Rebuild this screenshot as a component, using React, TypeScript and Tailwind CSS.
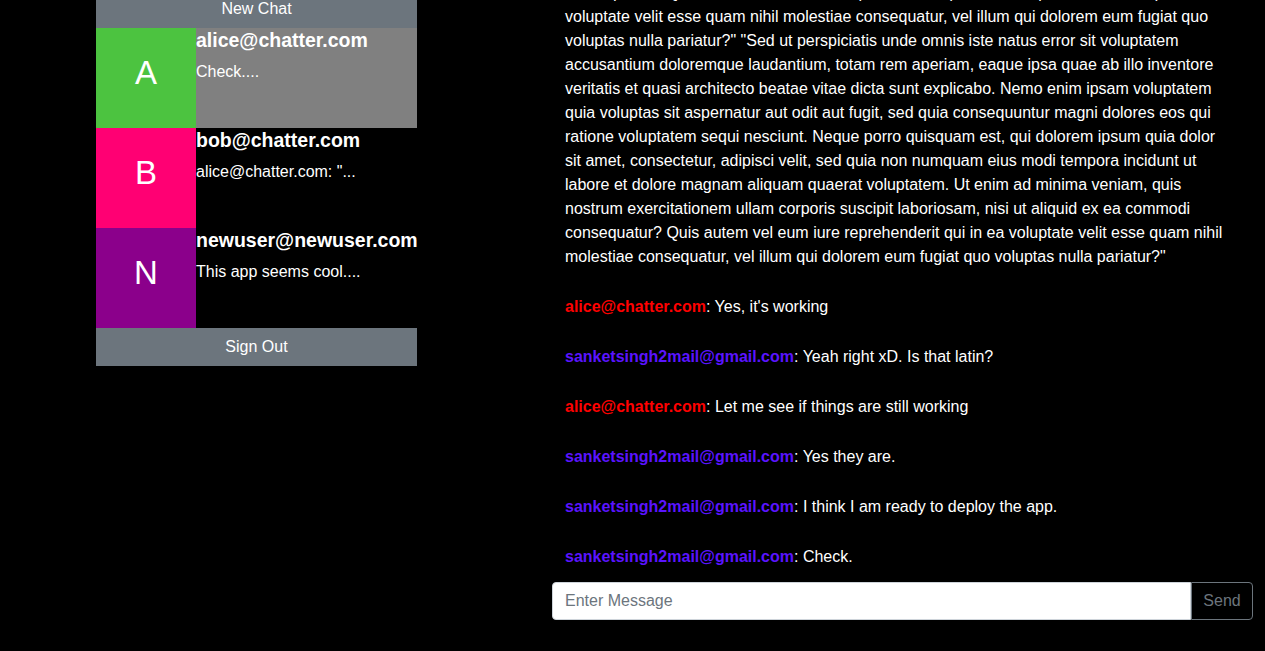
import React from 'react';

interface Conversation {
  email: string;
  preview: string;
  letter: string;
  color: string;
  active?: boolean;
}

interface Message {
  from: string;
  lines: string[];
}

const conversations: Conversation[] = [
  { email: 'alice@chatter.com', preview: 'Check....', letter: 'A', color: 'bg-[#4cc340]', active: true },
  { email: 'bob@chatter.com', preview: 'alice@chatter.com: "...', letter: 'B', color: 'bg-[#ff0073]' },
  { email: 'newuser@newuser.com', preview: 'This app seems cool....', letter: 'N', color: 'bg-[#8b008b]' },
];

const ME = 'sanketsingh2mail@gmail.com';

const messages: Message[] = [
  {
    from: ME,
    lines: [
      'labore et dolore magnam aliquam quaerat voluptatem. Ut enim ad minima veniam, quis',
      'nostrum exercitationem ullam corporis suscipit laboriosam, nisi ut aliquid ex ea commodi',
      'consequatur? Quis autem vel eum iure reprehenderit qui in ea voluptate velit esse quam nihil',
      'voluptate velit esse quam nihil molestiae consequatur, vel illum qui dolorem eum fugiat quo',
      'voluptas nulla pariatur?" "Sed ut perspiciatis unde omnis iste natus error sit voluptatem',
      'accusantium doloremque laudantium, totam rem aperiam, eaque ipsa quae ab illo inventore',
      'veritatis et quasi architecto beatae vitae dicta sunt explicabo. Nemo enim ipsam voluptatem',
      'quia voluptas sit aspernatur aut odit aut fugit, sed quia consequuntur magni dolores eos qui',
      'ratione voluptatem sequi nesciunt. Neque porro quisquam est, qui dolorem ipsum quia dolor',
      'sit amet, consectetur, adipisci velit, sed quia non numquam eius modi tempora incidunt ut',
      'labore et dolore magnam aliquam quaerat voluptatem. Ut enim ad minima veniam, quis',
      'nostrum exercitationem ullam corporis suscipit laboriosam, nisi ut aliquid ex ea commodi',
      'consequatur? Quis autem vel eum iure reprehenderit qui in ea voluptate velit esse quam nihil',
      'molestiae consequatur, vel illum qui dolorem eum fugiat quo voluptas nulla pariatur?"',
    ],
  },
  { from: 'alice@chatter.com', lines: ["Yes, it's working"] },
  { from: ME, lines: ['Yeah right xD. Is that latin?'] },
  { from: 'alice@chatter.com', lines: ['Let me see if things are still working'] },
  { from: ME, lines: ['Yes they are.'] },
  { from: ME, lines: ['I think I am ready to deploy the app.'] },
  { from: ME, lines: ['Check.'] },
];

const font = "font-['Liberation_Sans',Arial,sans-serif]";

const App: React.FC = () => {
  return (
    <div className={`h-[651px] w-full overflow-hidden bg-black text-white ${font}`}>
      <div className="flex pl-[96px]">
        {/* sidebar */}
        <div className="w-[321px] shrink-0 -mt-[10px]">
          <button className="block h-[38px] w-full bg-[#6c757d] text-center text-base leading-6 text-white">
            New Chat
          </button>
          {conversations.map((c) => (
            <div key={c.email} className={`flex h-[100px] ${c.active ? 'bg-[#808080]' : 'bg-black'}`}>
              <div className={`flex h-[100px] w-[100px] shrink-0 items-center justify-center pb-[10px] text-[33px] text-white ${c.color}`}>
                {c.letter}
              </div>
              <div className="min-w-0 flex-1">
                <h5 className="mb-2 whitespace-nowrap text-[19.5px] font-semibold leading-6">{c.email}</h5>
                <p className="text-base leading-6">{c.preview}</p>
              </div>
            </div>
          ))}
          <button className="block h-[38px] w-full bg-[#6c757d] text-center text-base leading-6 text-white">
            Sign Out
          </button>
        </div>

        {/* chat */}
        <div className="ml-[135px] w-[701px] shrink-0">
          <div className="flex h-[582px] flex-col justify-end gap-[26px] overflow-hidden px-[13px] pb-[13px]">
            {messages.map((m, i) => (
              <div key={i} className="shrink-0 text-base leading-6">
                {m.lines.map((line, j) => (
                  <span key={j} className="block whitespace-nowrap">
                    {j === 0 && (
                      <>
                        <span className={`font-bold ${m.from === ME ? 'text-[#5a14ff]' : 'text-[#ff0000]'}`}>{m.from}</span>
                        {': '}
                      </>
                    )}
                    {line}
                  </span>
                ))}
              </div>
            ))}
          </div>
          <div className="flex h-[38px]">
            <input
              type="text"
              placeholder="Enter Message"
              className="h-full min-w-0 flex-1 rounded-l border border-[#ced4da] bg-white px-3 text-base text-[#495057] placeholder:text-[#6c757d] outline-none"
            />
            <button className="h-full w-[62px] rounded-r border border-[#6c757d] bg-black text-base text-[#6c757d]">
              Send
            </button>
          </div>
        </div>
      </div>
    </div>
  );
};

export default App;
